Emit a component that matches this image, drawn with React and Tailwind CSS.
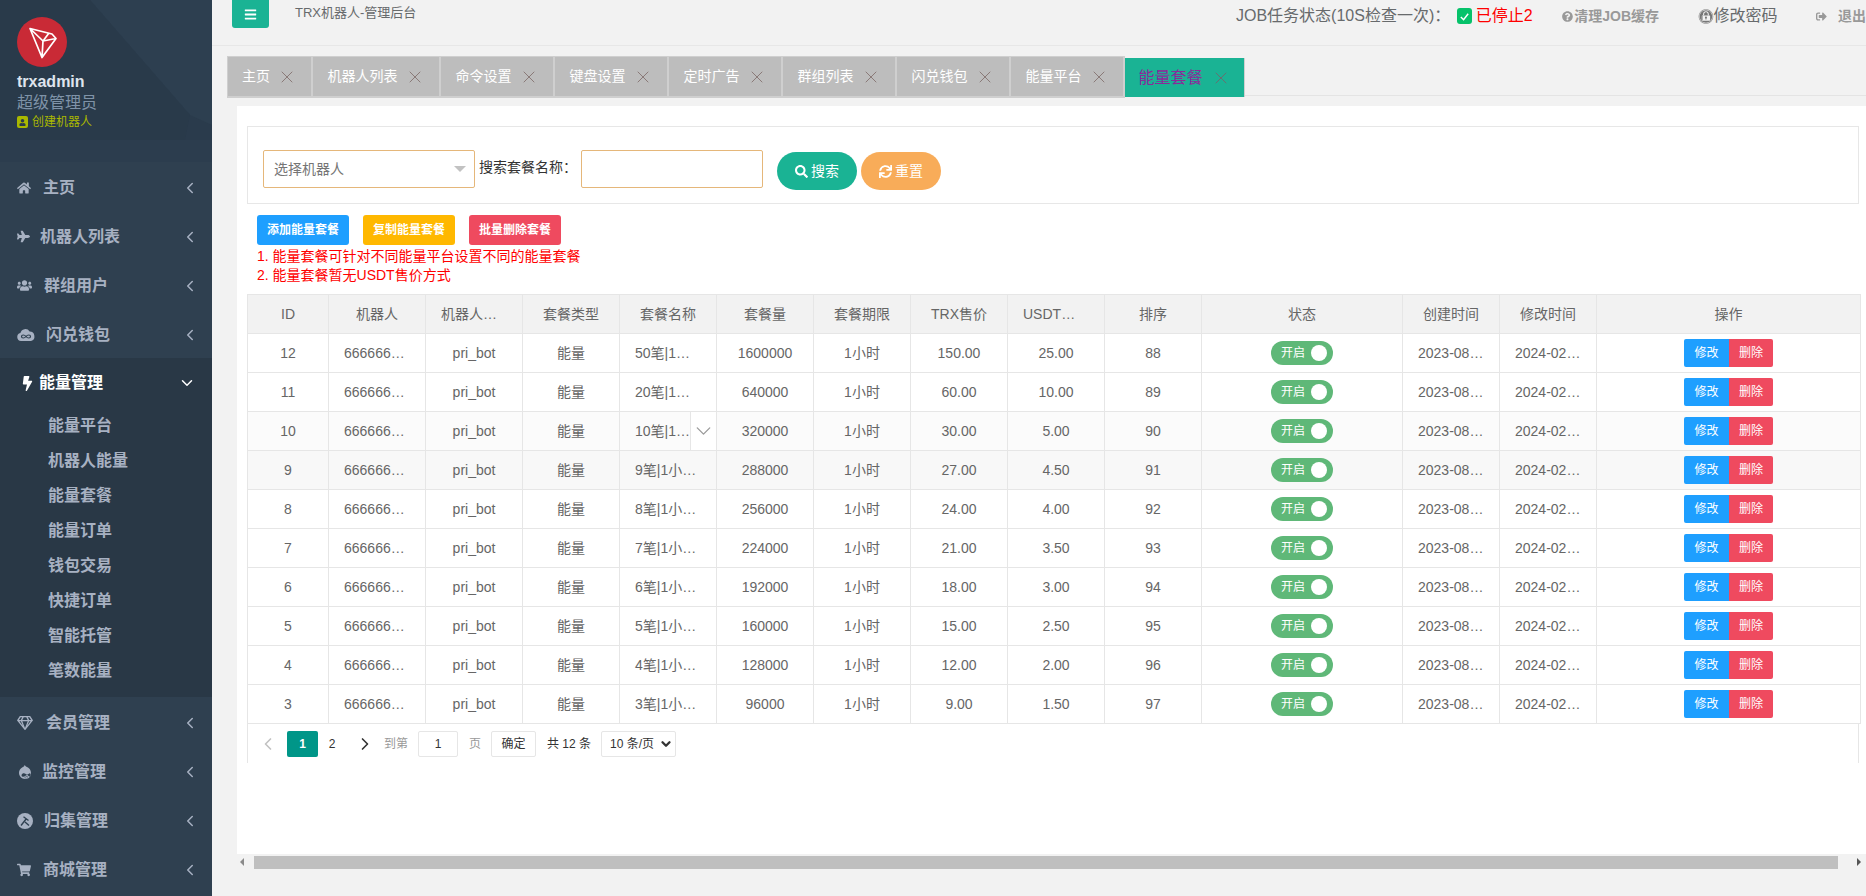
import React from 'react';
import {
  FaHome, FaPlane, FaUsers, FaBolt, FaRegGem, FaDrupal, FaShoppingCart, FaUser,
  FaBars, FaQuestionCircle, FaExpeditedssl, FaSignOutAlt, FaSearch, FaSync,
} from 'react-icons/fa';
import { FiChevronLeft, FiChevronDown, FiChevronRight, FiX } from 'react-icons/fi';

const CloudIcon = () => (
  <svg width="18" height="13" viewBox="0 0 18 13">
    <path d="M4 13 A4 4 0 0 1 3.4 5.1 A5 5 0 0 1 12.6 3.6 A4.8 4.8 0 0 1 14 13 Z" fill="#a7b1c2" />
    <path d="M9 8.5 C7.5 6.5 4.5 6.5 4.5 8.5 C4.5 10.5 7.5 10.5 9 8.5 C10.5 6.5 13.5 6.5 13.5 8.5 C13.5 10.5 10.5 10.5 9 8.5 Z" fill="none" stroke="#2f4050" strokeWidth="1.2" />
  </svg>
);

const ToolsIcon = () => (
  <svg width="16" height="16" viewBox="0 0 16 16">
    <circle cx="8" cy="8" r="8" fill="#a7b1c2" />
    <path d="M4 12.5 L9.5 5.5 M6.5 3.8 L11.5 7.5 M8 9 L12 12.5" stroke="#2f4050" strokeWidth="1.4" fill="none" />
  </svg>
);

const menuTop = [
  { icon: <FaHome className="text-[14px]" />, label: '主页', box: 'w-[26px]' },
  { icon: <FaPlane className="text-[13px]" />, label: '机器人列表', box: 'w-[23px]' },
  { icon: <FaUsers className="text-[15px]" />, label: '群组用户', box: 'w-[27px]' },
  { icon: <CloudIcon />, label: '闪兑钱包', box: 'w-[29px]' },
];
const menuBottom = [
  { icon: <FaRegGem className="text-[16px]" />, label: '会员管理', box: 'w-[29px]' },
  { icon: <FaDrupal className="text-[16px]" />, label: '监控管理', box: 'w-[25px]' },
  { icon: <ToolsIcon />, label: '归集管理', box: 'w-[27px]' },
  { icon: <FaShoppingCart className="text-[14px]" />, label: '商城管理', box: 'w-[26px]' },
];
const subMenu = ['能量平台', '机器人能量', '能量套餐', '能量订单', '钱包交易', '快捷订单', '智能托管', '笔数能量'];

const tabs = [
  { label: '主页', w: 'w-[86px]' },
  { label: '机器人列表', w: 'w-[128px]' },
  { label: '命令设置', w: 'w-[114px]' },
  { label: '键盘设置', w: 'w-[114px]' },
  { label: '定时广告', w: 'w-[114px]' },
  { label: '群组列表', w: 'w-[114px]' },
  { label: '闪兑钱包', w: 'w-[114px]' },
  { label: '能量平台', w: 'w-[114px]' },
];

const headers = ['ID', '机器人', '机器人用户名', '套餐类型', '套餐名称', '套餐量', '套餐期限', 'TRX售价', 'USDT售价', '排序', '状态', '创建时间', '修改时间', '操作'];
const colWidths = ['w-[81px]', 'w-[97px]', 'w-[97px]', 'w-[97px]', 'w-[97px]', 'w-[97px]', 'w-[97px]', 'w-[97px]', 'w-[97px]', 'w-[97px]', 'w-[201px]', 'w-[97px]', 'w-[97px]', 'w-[264px]'];

const rows = [
  [12, '50笔|1小时能量', 1600000, '150.00', '25.00', 88],
  [11, '20笔|1小时能量', 640000, '60.00', '10.00', 89],
  [10, '10笔|1小时能量', 320000, '30.00', '5.00', 90],
  [9, '9笔|1小时能量', 288000, '27.00', '4.50', 91],
  [8, '8笔|1小时能量', 256000, '24.00', '4.00', 92],
  [7, '7笔|1小时能量', 224000, '21.00', '3.50', 93],
  [6, '6笔|1小时能量', 192000, '18.00', '3.00', 94],
  [5, '5笔|1小时能量', 160000, '15.00', '2.50', 95],
  [4, '4笔|1小时能量', 128000, '12.00', '2.00', 96],
  [3, '3笔|1小时能量', 96000, '9.00', '1.50', 97],
];

const Cell = ({ children }) => (
  <td className="border border-[#e6e6e6] p-0">
    <div className="px-[15px] truncate leading-[38px]">{children}</div>
  </td>
);

const MenuItem = ({ icon, label, box }) => (
  <div className="h-[49px] pt-[2px] flex items-center pl-[17px] pr-[13px] text-[#a7b1c2] font-bold text-[16px]">
    <span className={`${box} shrink-0 flex items-center`}>{icon}</span>
    <span>{label}</span>
    <FiChevronLeft className="ml-auto text-[18px]" />
  </div>
);

export default function App() {
  return (
    <div className="w-[1866px] h-[896px] flex overflow-hidden bg-[#f2f2f2] text-[#666] text-[14px] font-['Liberation_Sans','Noto_Sans_CJK_SC',sans-serif]">
      {/* Sidebar */}
      <aside className="w-[212px] shrink-0 bg-[#2f4050]">
        <div className="relative h-[162px] bg-[#2a3b4c] pl-[17px] pt-[17px] overflow-hidden">
          <svg className="absolute inset-0" width="212" height="162" viewBox="0 0 212 162">
            <polygon points="90,0 212,0 212,125 190,115" fill="#2d3f50" />
            <polygon points="0,0 90,0 190,115 185,140 0,140" fill="#293a4a" />
            <polygon points="0,140 212,140 212,162 0,162" fill="#2c3d4e" />
          </svg>
          <div className="relative">
            <svg width="50" height="50" viewBox="0 0 50 50" className="block">
              <circle cx="25" cy="25" r="25" fill="#c92a36" />
              <path d="M13 11.5 L35 17 L39 21.5 L25 40.5 Z M13 11.5 L26 24 L25 40.5 M26 24 L39 21.5 M26 24 L32 16" fill="none" stroke="#fff" strokeWidth="1.7" strokeLinejoin="round" />
            </svg>
            <div className="mt-[5px] text-[16px] leading-[20px] font-bold text-[#dfe4ed]">trxadmin</div>
            <div className="text-[16px] leading-[21px] text-[#7f93a8]">超级管理员</div>
            <div className="flex items-center text-[12px] leading-[18px] text-[#a9b800]">
              <span className="w-[11px] h-[12px] rounded-[2px] bg-[#a9b800] flex items-center justify-center mr-[4px]">
                <FaUser className="text-[#2a3b4c] text-[7px]" />
              </span>
              创建机器人
            </div>
          </div>
        </div>
        {menuTop.map((m) => (
          <MenuItem key={m.label} {...m} />
        ))}
        <div className="bg-[#293846] h-[339px]">
          <div className="h-[50px] flex items-center pl-[20px] pr-[16px] text-white font-bold text-[16px]">
            <span className="w-[19px] shrink-0"><FaBolt className="text-[15px]" /></span>
            <span>能量管理</span>
            <FiChevronDown className="ml-auto text-[18px]" />
          </div>
          <div>
            {subMenu.map((s) => (
              <div key={s} className="h-[35px] flex items-center pl-[48px] text-[#a7b1c2] font-bold text-[16px]">{s}</div>
            ))}
          </div>
        </div>
        {menuBottom.map((m) => (
          <MenuItem key={m.label} {...m} />
        ))}
      </aside>

      {/* Main */}
      <main className="flex-1 min-w-0 flex flex-col">
        <header className="h-[46px] shrink-0 border-b border-[#e7e7e7] flex items-start overflow-hidden">
          <button className="ml-[20px] w-[37px] h-[28px] rounded-b-[3px] bg-[#1ab394] text-white flex items-center justify-center">
            <FaBars className="text-[13px]" />
          </button>
          <span className="ml-[26px] mt-[4px] text-[13px] leading-[18px] text-[#676a6c]">TRX机器人-管理后台</span>
          <div className="ml-auto mt-[4px] flex items-center whitespace-nowrap w-[630px] shrink-0">
            <span className="text-[16px] leading-[22px] w-[222px] text-[#676a6c]">JOB任务状态(10S检查一次)：</span>
            <span className="w-[15px] h-[16px] rounded-[3px] bg-[#06c26a] text-white flex items-center justify-center">
              <svg width="11" height="11" viewBox="0 0 12 12" fill="none" stroke="#fff" strokeWidth="1.6"><path d="M2 6.5 L5 9.5 L10 3" /></svg>
            </span>
            <span className="ml-[4px] text-[16px] text-[#ff0000] w-[86px]">已停止2</span>
            <FaQuestionCircle className="text-[11px] text-[#999] w-[13px]" />
            <span className="text-[14px] font-bold text-[#999] w-[124px]">清理JOB缓存</span>
            <FaExpeditedssl className="text-[15px] text-[#777] w-[16px]" />
            <span className="text-[16px] text-[#676a6c] w-[103px]">修改密码</span>
            <FaSignOutAlt className="text-[11px] text-[#999]" />
            <span className="ml-[11px] text-[14px] font-bold text-[#999]">退出</span>
          </div>
        </header>

        {/* Tabs */}
        <div className="mt-[10px] ml-[15px] h-[42px] shrink-0 flex relative after:absolute after:left-0 after:right-0 after:top-[39px] after:h-px after:bg-[#e4e4e4]">
          {tabs.map((t) => (
            <div key={t.label} className={`${t.w} relative z-10 h-[42px] flex items-center justify-center gap-[7px] bg-[#bdbdbd] border-t border-b-2 border-r-2 border-[#cfcfcf] first:border-l text-white text-[14px]`}>
              {t.label}
              <FiX strokeWidth={1.2} className="text-[#8a7a78] text-[20px]" />
            </div>
          ))}
          <div className="w-[120px] relative z-10 h-[39px] mt-[2px] flex items-center justify-center gap-[8px] bg-[#1ab394] border-r border-[#d0d0d0] text-[#8a2a9a] text-[16px]">
            能量套餐
            <FiX strokeWidth={1.2} className="text-[#667070] text-[20px]" />
          </div>
        </div>

        {/* Content */}
        <section className="ml-[25px] mt-[8px] h-[748px] shrink-0 bg-white px-[10px] pt-[20px] relative">
          <div className="w-[1612px] h-[78px] border border-[#e7e7e7] flex items-start pt-[23px] pl-[15px]">
            <div className="w-[212px] h-[38px] border border-[#e5b77a] rounded-[2px] flex items-center pl-[10px] pr-[8px] text-[#757575]">
              选择机器人
              <span className="ml-auto w-0 h-0 border-x-[6px] border-x-transparent border-t-[6px] border-t-[#c2c2c2]" />
            </div>
            <span className="ml-[4px] mt-[7px] w-[102px] text-[#333] leading-[20px]">搜索套餐名称：</span>
            <div className="w-[182px] h-[38px] border border-[#e5b77a] rounded-[2px]" />
            <button className="ml-[14px] mt-[2px] w-[80px] h-[38px] rounded-full bg-[#1ab394] text-white flex items-center justify-center gap-[3px]">
              <FaSearch className="text-[13px]" />搜索
            </button>
            <button className="ml-[4px] mt-[2px] w-[80px] h-[38px] rounded-full bg-[#f8ac59] text-white flex items-center justify-center gap-[3px]">
              <FaSync className="text-[13px]" />重置
            </button>
          </div>

          <div className="mt-[11px] ml-[10px] flex gap-[14px]">
            <button className="w-[92px] h-[30px] rounded-[3px] bg-[#1e9fff] text-white text-[12px] font-bold">添加能量套餐</button>
            <button className="w-[92px] h-[30px] rounded-[3px] bg-[#ffb800] text-white text-[12px] font-bold">复制能量套餐</button>
            <button className="w-[92px] h-[30px] rounded-[3px] bg-[#ef4a5f] text-white text-[12px] font-bold">批量删除套餐</button>
          </div>
          <div className="ml-[10px] mt-[2px] text-[14px] leading-[19px] text-[#ff0000]">
            <p>1. 能量套餐可针对不同能量平台设置不同的能量套餐</p>
            <p>2. 能量套餐暂无USDT售价方式</p>
          </div>

          {/* Table */}
          <div className="mt-[9px] w-[1612px] h-[469px] border-x border-[#e6e6e6] relative">
            <table className="table-fixed border-collapse w-[1612px] -ml-px text-center">
              <colgroup>
                {colWidths.map((w, i) => <col key={i} className={w} />)}
              </colgroup>
              <thead>
                <tr className="bg-[#f2f2f2]">
                  {headers.map((h) => <Cell key={h}>{h}</Cell>)}
                </tr>
              </thead>
              <tbody>
                {rows.map((r) => (
                  <tr key={r[0]} className={r[0] === 10 ? 'bg-[#fbfbfb]' : r[0] === 9 ? 'bg-[#f8f8f8]' : 'bg-white'}>
                    <Cell>{r[0]}</Cell>
                    <Cell>666666666666</Cell>
                    <Cell>pri_bot</Cell>
                    <Cell>能量</Cell>
                    <td className="border border-[#e6e6e6] p-0 relative">
                      <div className="px-[15px] truncate leading-[38px]">{r[1]}</div>
                      {r[0] === 10 && (
                        <div className="absolute right-0 top-0 h-[38px] w-[26px] border-l border-[#e6e6e6] bg-white flex items-center justify-center">
                          <FiChevronDown strokeWidth={1.2} className="text-[#999] text-[26px]" />
                        </div>
                      )}
                    </td>
                    <Cell>{r[2]}</Cell>
                    <Cell>1小时</Cell>
                    <Cell>{r[3]}</Cell>
                    <Cell>{r[4]}</Cell>
                    <Cell>{r[5]}</Cell>
                    <td className="border border-[#e6e6e6] p-0">
                      <div className="mx-auto w-[62px] h-[24px] rounded-full bg-[#5fb878] flex items-center pl-[10px] text-white text-[12px]">
                        开启
                        <span className="ml-auto mr-[6px] w-[16px] h-[16px] rounded-full bg-white" />
                      </div>
                    </td>
                    <Cell>2023-08-30 12:00:00</Cell>
                    <Cell>2024-02-18 12:00:00</Cell>
                    <td className="border border-[#e6e6e6] p-0">
                      <div className="flex justify-center">
                        <button className="w-[45px] h-[28px] rounded-l-[2px] bg-[#1e9fff] text-white text-[12px]">修改</button>
                        <button className="w-[44px] h-[28px] rounded-r-[2px] bg-[#ef4a5f] text-white text-[12px]">删除</button>
                      </div>
                    </td>
                  </tr>
                ))}
              </tbody>
            </table>

            {/* Pager */}
            <div className="mt-[7px] flex items-center h-[26px] text-[12px] text-[#666]">
              <FiChevronLeft className="ml-[10px] text-[#c2c2c2] text-[20px]" />
              <span className="ml-[9px] w-[31px] h-[26px] rounded-[2px] bg-[#009688] text-white font-bold flex items-center justify-center">1</span>
              <span className="w-[28px] text-center text-[#333]">2</span>
              <FiChevronRight className="ml-[9px] text-[#333] text-[20px]" />
              <span className="ml-[9px] text-[#999]">到第</span>
              <span className="ml-[10px] w-[40px] h-[26px] border border-[#e6e6e6] rounded-[2px] text-[#333] flex items-center justify-center">1</span>
              <span className="ml-[11px] text-[#999]">页</span>
              <span className="ml-[10px] w-[45px] h-[26px] border border-[#e6e6e6] rounded-[2px] text-[#333] flex items-center justify-center">确定</span>
              <span className="ml-[11px] text-[#333]">共 12 条</span>
              <span className="ml-[10px] w-[75px] h-[26px] border border-[#e6e6e6] rounded-[2px] text-[#333] flex items-center pl-[8px]">
                10 条/页
                <FiChevronDown strokeWidth={4} className="ml-auto mr-[2px] text-[14px]" />
              </span>
            </div>
          </div>
        </section>

        {/* Horizontal scrollbar */}
        <div className="ml-[25px] h-[16px] shrink-0 flex items-center relative">
          <span className="ml-[3px] w-0 h-0 border-y-[4px] border-y-transparent border-r-[4px] border-r-[#8a8a8a]" />
          <div className="ml-[10px] w-[1584px] h-[13px] bg-[#bfbfbf]" />
          <span className="ml-[19px] w-0 h-0 border-y-[4px] border-y-transparent border-l-[4px] border-l-[#555]" />
        </div>
      </main>
    </div>
  );
}
